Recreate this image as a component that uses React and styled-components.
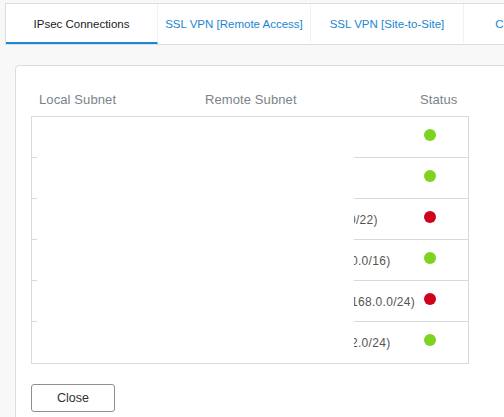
import React from 'react';
import styled, { createGlobalStyle } from 'styled-components';

const GlobalStyle = createGlobalStyle`
  html, body {
    margin: 0;
    padding: 0;
    background: #f8f8f8;
    overflow: hidden;
  }
  body {
    font-family: "Liberation Sans", Arial, sans-serif;
  }
`;

const Page = styled.div`
  padding: 3px 0 0 5px;
  width: 504px;
  height: 417px;
  box-sizing: border-box;
  overflow: hidden;
`;

const TabBar = styled.div`
  display: flex;
  width: 620px;
  background: #fff;
  border-top: 1px solid #dedede;
  border-left: 1px solid #dedede;
  border-bottom: 1px solid #dedede;
`;

const Tab = styled.div`
  width: 153px;
  height: 40px;
  flex: none;
  box-sizing: border-box;
  display: flex;
  align-items: center;
  justify-content: center;
  font-size: 11.5px;
  white-space: nowrap;
  color: ${(p) => (p.$active ? '#1c1c1c' : '#1b86cf')};
  border-right: 1px solid #f1f1f1;
  border-bottom: 2px solid ${(p) => (p.$active ? '#1f86d1' : 'transparent')};
  padding-top: 2px;

  &:first-child {
    width: 152px;
  }
`;

const Content = styled.div`
  padding: 20px 0 0 10px;
`;

const Card = styled.div`
  background: #fff;
  border: 1px solid #dcdcdc;
  border-radius: 4px 0 0 0;
  padding: 15px 15px 0 15px;
  width: 540px;
  height: 400px;
`;

const HeaderRow = styled.div`
  display: grid;
  grid-template-columns: 166px 223px 49px;
  height: 35px;
  align-items: center;
  width: 438px;
`;

const HeaderCell = styled.div`
  font-size: 13px;
  color: #7a8389;
  padding-left: ${(p) => p.$indent || 0}px;
  padding-top: 1px;
  letter-spacing: 0.1px;
`;

const TableBox = styled.div`
  width: 436px;
  border: 1px solid #d9d9d9;
`;

const Row = styled.div`
  display: grid;
  grid-template-columns: 5px 317px 67px 47px;
  height: 41px;
  box-sizing: border-box;

  &:last-child > * {
    border-bottom-color: transparent;
  }
`;

const Stub = styled.div`
  border-bottom: 1px solid #d9d9d9;
`;

const Blank = styled.div`
  background: #fff;
  border-bottom: 1px solid transparent;
`;

const Tail = styled.div`
  border-bottom: 1px solid #d9d9d9;
  display: flex;
  align-items: center;
  overflow: visible;
  white-space: nowrap;
  font-size: 12px;
  letter-spacing: 0.3px;
  color: #555;
  padding-top: 2px;
`;

const TailText = styled.span`
  margin-left: ${(p) => p.$shift}px;
  clip-path: inset(0 0 0 ${(p) => -p.$shift}px);
`;

const StatusCell = styled.div`
  border-bottom: 1px solid #d9d9d9;
  display: flex;
  align-items: center;
  padding-left: 3px;
  padding-bottom: 5px;
  box-sizing: border-box;
`;

const Dot = styled.span`
  width: 12px;
  height: 12px;
  border-radius: 50%;
  background: ${(p) => (p.$up ? '#7ed321' : '#d0021b')};
`;

const CloseButton = styled.button`
  margin-top: 20px;
  width: 84px;
  height: 28px;
  background: #fff;
  border: 1px solid #8f8f8f;
  border-radius: 3px;
  font-family: "Liberation Sans", Arial, sans-serif;
  font-size: 12.5px;
  color: #333;
  padding: 0;
  cursor: pointer;
`;

const tabs = [
  'IPsec Connections',
  'SSL VPN [Remote Access]',
  'SSL VPN [Site-to-Site]',
  'Clientless Access',
];

const rows = [
  { tail: '', shift: 0, up: true },
  { tail: '', shift: 0, up: true },
  { tail: '0/22)', shift: -5, up: false },
  { tail: '0.0/16)', shift: -3, up: true },
  { tail: '168.0.0/24)', shift: -3, up: false },
  { tail: '2.0/24)', shift: -3, up: true },
];

const App = () => (
  <Page>
    <GlobalStyle />
    <TabBar>
      {tabs.map((t, i) => (
        <Tab key={t} $active={i === 0}>{t}</Tab>
      ))}
    </TabBar>
    <Content>
      <Card>
        <HeaderRow>
          <HeaderCell $indent={8}>Local Subnet</HeaderCell>
          <HeaderCell $indent={8}>Remote Subnet</HeaderCell>
          <HeaderCell>Status</HeaderCell>
        </HeaderRow>
        <TableBox>
          {rows.map((r, i) => (
            <Row key={i}>
              <Stub />
              <Blank />
              <Tail>
                {r.tail && <TailText $shift={r.shift}>{r.tail}</TailText>}
              </Tail>
              <StatusCell>
                <Dot $up={r.up} />
              </StatusCell>
            </Row>
          ))}
        </TableBox>
        <CloseButton>Close</CloseButton>
      </Card>
    </Content>
  </Page>
);

export default App;
